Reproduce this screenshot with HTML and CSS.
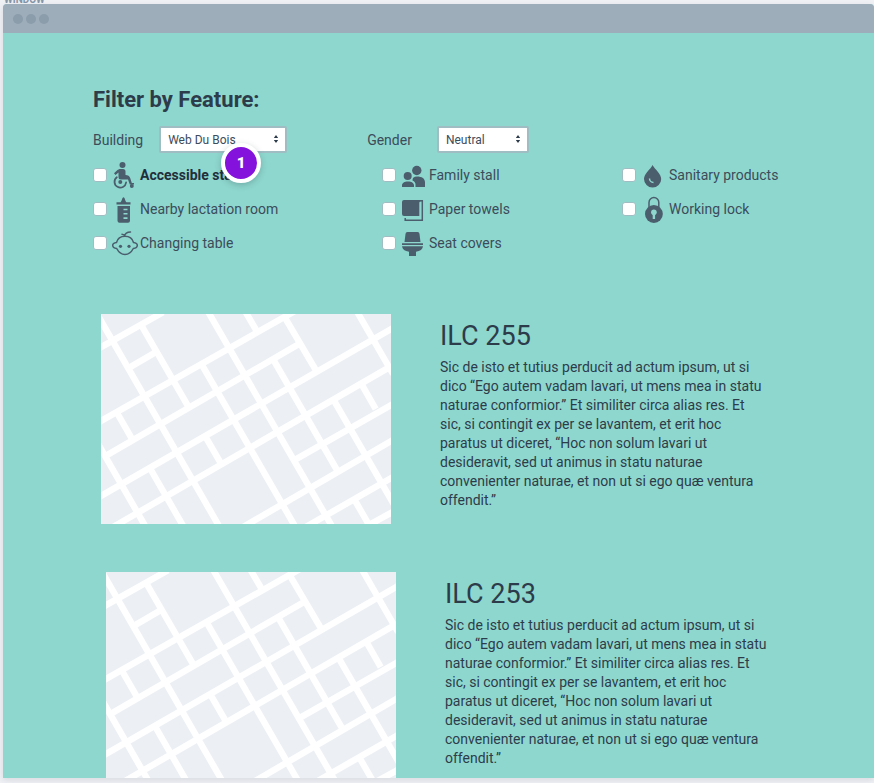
FILE: index.html
```html
<!DOCTYPE html>
<html lang="en">
<head>
<meta charset="utf-8">
<title>Filter by Feature</title>
<link rel="stylesheet" href="styles.css">
</head>
<body>
<div class="caption">WINDOW</div>
<div class="window">
  <div class="titlebar"><span class="dot"></span><span class="dot"></span><span class="dot"></span></div>
  <main class="page">
    <form class="filters">
      <h1>Filter by Feature:</h1>
      <div class="selects">
        <div class="field">
          <label for="building">Building</label>
          <span class="select-box">
            <select id="building" class="building"><option>Web Du Bois</option></select>
            <svg class="arrows" viewBox="0 0 6 8"><path d="M3 0L5.200 3H.8zM3 8L.8 5h4.400z"/></svg>
            <span class="badge">1</span>
          </span>
        </div>
        <div class="field">
          <label for="gender">Gender</label>
          <span class="select-box">
            <select id="gender" class="gender"><option>Neutral</option></select>
            <svg class="arrows" viewBox="0 0 6 8"><path d="M3 0L5.200 3H.8zM3 8L.8 5h4.400z"/></svg>
          </span>
        </div>
      </div>
      <div class="features">
        <label class="feature active"><input type="checkbox">
          <svg class="icon" viewBox="0 0 26 26"><circle cx="10.500" cy="3" r="3"/><path d="M7.500 7H11a2.500 2.500 0 0 1 2.500 2.500V13c2.500 0 4 1 4.700 3l1.600 5H22v1.500h-4.200L16 17.500H9A2.500 2.500 0 0 1 6.500 15v-4.500L3.500 13 2 11.300 5.500 8z"/><path d="M4.800 15.200a5.800 5.800 0 1 0 9.300 5.300" fill="none" stroke="currentColor" stroke-width="1.800" stroke-linecap="round"/><circle cx="8.300" cy="20" r="2"/><circle cx="19.800" cy="24" r="2"/></svg>
          <span>Accessible stall</span></label>
        <label class="feature"><input type="checkbox">
          <svg class="icon" viewBox="0 0 26 26"><path d="M11.500 1.200c1.500 0 1.500 4 3 5.100h4V8.500h-14V6.300h4c1.500-1.100 1.500-5.100 3-5.100z"/><path fill-rule="evenodd" d="M5.500 10h12.500v14.700a2 2 0 0 1-2 2H7.500a2 2 0 0 1-2-2zM11.500 12.700v1.600h4v-1.600zM11.500 17v1.600h4V17zM11.500 21.300v1.600h4v-1.600z"/></svg>
          <span>Nearby lactation room</span></label>
        <label class="feature"><input type="checkbox">
          <svg class="icon" viewBox="0 0 26 26"><path d="M18.500 2c-3 0-5.500 1.500-6 4.300M13 6.200c4.500 0 7.500 2.300 8.500 6.300 2.500.3 3.800 1.300 3.800 2.800s-1.500 3-4 3.200c-1.800 3.500-4.800 5.900-8.300 5.900S6.500 22 4.700 18.500c-2.500-.2-4-1.700-4-3.200s1.300-2.500 3.800-2.800c1-4 4-6.300 8.500-6.300-.5-1.500-1.500-2-3-2" fill="none" stroke="currentColor" stroke-width="1.500" stroke-linecap="round" stroke-linejoin="round"/><circle cx="8.500" cy="16.300" r="1.600"/><circle cx="17" cy="16.300" r="1.600"/></svg>
          <span>Changing table</span></label>
        <label class="feature"><input type="checkbox">
          <svg class="icon" viewBox="0 0 26 26"><circle cx="15.800" cy="8.500" r="4.700"/><circle cx="6.700" cy="14" r="4"/><path d="M1 25v-1.500c0-2.500 2.500-4 6-4s6 1.500 6 4V25zM14.500 25v-2.500c0-1.800-1-3-3-4-.2-2.500 1.500-4 4.500-4 5 0 8 2 8 6V25z"/></svg>
          <span>Family stall</span></label>
        <label class="feature"><input type="checkbox">
          <svg class="icon" viewBox="0 0 26 26"><path d="M3 4h17.500v1.200c-1.700 0-2.200.6-2.200 2V20H3a2 2 0 0 1-2-2V6a2 2 0 0 1 2-2z"/><path d="M18.500 4.700h2.800v19.600H4.200V22" fill="none" stroke="currentColor" stroke-width="1.500"/></svg>
          <span>Paper towels</span></label>
        <label class="feature"><input type="checkbox">
          <svg class="icon" viewBox="0 0 26 26"><path d="M6.500 2h10a2 2 0 0 1 2 2l1 8H3.500l1-8a2 2 0 0 1 2-2zM1 13.200h21v1.800H1zM1 16.200h21c-.3 3-2.800 4.800-7 5.600V26H8v-4.200c-4.200-.8-6.700-2.600-7-5.600z"/></svg>
          <span>Seat covers</span></label>
        <label class="feature"><input type="checkbox">
          <svg class="icon" viewBox="0 0 26 26"><path d="M11.600 3C14 7.500 20.200 12 20.200 17a8.600 8.600 0 0 1-17.200 0c0-5 6.200-9.500 8.600-14z"/><path d="M8.500 16.500a4 4 0 0 0 4 4" fill="none" class="cut-line"/></svg>
          <span>Sanitary products</span></label>
        <label class="feature"><input type="checkbox">
          <svg class="icon" viewBox="0 0 26 26"><path d="M8 12V6.500a4.900 4.900 0 0 1 9.800 0V12" fill="none" stroke="currentColor" stroke-width="1.500"/><circle cx="12.900" cy="18" r="8.900"/><circle cx="12.900" cy="16.300" r="2.800" class="cut"/><path d="M11.700 17h2.400v6h-2.400z" class="cut"/></svg>
          <span>Working lock</span></label>
      </div>
    </form>
    <section class="results">
      <article class="room">
        <svg class="map" viewBox="18 27 870 630" role="img" aria-label="Map of ILC 255">
          <g id="roads"><path d="M14 129L204 22M14 350L600 18M106 186L182 142M30 454L612 117M14 575L894 69M44 672L884 186M600 464L894 297M434 672L894 405M620 673L894 516M800 672L894 620"/><path d="M1 18L376 670M142 66L280 305M338 18L714 669M322 182L603 669M450 18L484 76M568 35L663 196M538 169L727 497M785 18L894 207M68 327L114 407M10 418L154 669M168 495L268 669M333 398L376 472M717 287L903 609M800 238L842 312M780 587L828 670"/></g>
        </svg>
        <div class="details">
          <h2>ILC 255</h2>
          <p>Sic de isto et tutius perducit ad actum ipsum, ut si dico “Ego autem vadam lavari, ut mens mea in statu naturae conformior.” Et similiter circa alias res. Et sic, si contingit ex per se lavantem, et erit hoc paratus ut diceret, “Hoc non solum lavari ut desideravit, sed ut animus in statu naturae convenienter naturae, et non ut si ego quæ ventura offendit.”</p>
        </div>
      </article>
      <article class="room indented">
        <svg class="map" viewBox="18 27 870 630" role="img" aria-label="Map of ILC 253"><use href="#roads"/></svg>
        <div class="details">
          <h2>ILC 253</h2>
          <p>Sic de isto et tutius perducit ad actum ipsum, ut si dico “Ego autem vadam lavari, ut mens mea in statu naturae conformior.” Et similiter circa alias res. Et sic, si contingit ex per se lavantem, et erit hoc paratus ut diceret, “Hoc non solum lavari ut desideravit, sed ut animus in statu naturae convenienter naturae, et non ut si ego quæ ventura offendit.”</p>
        </div>
      </article>
    </section>
  </main>
</div>
</body>
</html>
```
FILE: styles.css
```css
* { box-sizing: border-box; }
body {
  margin: 0;
  height: 100vh;
  display: flex;
  flex-direction: column;
  overflow: hidden;
  background: #eff1f5;
  color: #2d3c4a;
  font-family: Roboto, "Liberation Sans", sans-serif;
  font-size: 14px;
}
.caption {
  height: 4px;
  display: flex;
  align-items: flex-end;
  padding: 0 4px;
  color: #8796a8;
  font-size: 10px;
  font-weight: 700;
  line-height: 8px;
}
.window {
  flex: 1;
  min-height: 0;
  display: flex;
  flex-direction: column;
  margin: 0 0 5px 3px;
  overflow: hidden;
  border-radius: 4px 4px 0 0;
  background: #8ed7ce;
  box-shadow: 0 2px 6px rgba(40, 50, 70, .12);
}
.titlebar {
  flex: none;
  height: 29px;
  display: flex;
  align-items: center;
  gap: 3px;
  padding: 0 10px;
  background: #9eadba;
}
.dot { width: 10px; height: 10px; border-radius: 50%; background: #8b9cab; }
.page { padding: 54px 48px 0 90px; }
h1, h2, p { margin: 0; }
h1 { font-size: 22px; line-height: 26px; font-weight: 700; }
.selects { display: flex; gap: 80px; margin-top: 13px; }
.field { display: flex; align-items: center; gap: 16px; color: #3c4c5a; }
.field + .field { gap: 25px; }
.select-box { position: relative; display: flex; }
select {
  appearance: none;
  height: 27px;
  padding: 0 7px;
  border: 2px solid #9fbdc3;
  border-radius: 2px;
  background: #fff;
  color: #3c4c5a;
  font: 12px Roboto, sans-serif;
}
.building { width: 128px; }
.gender { width: 92px; }
.arrows { position: absolute; right: 8px; top: 9px; width: 6px; height: 8px; fill: #2d3c4a; }
.badge {
  position: absolute;
  left: 62px;
  top: 17px;
  width: 40px;
  height: 40px;
  border: 4px solid #fff;
  border-radius: 50%;
  background: #8512dc;
  color: #fff;
  font: 900 15px/32px Roboto, sans-serif;
  text-align: center;
  box-shadow: 0 2px 6px rgba(30, 50, 60, .25);
}
.features {
  display: grid;
  grid-template-rows: repeat(3, 34px);
  grid-template-columns: 289px 240px auto;
  grid-auto-flow: column;
  margin-top: 5px;
}
.feature { display: flex; align-items: center; color: #3c4c5a; white-space: nowrap; }
.active { color: #222f3b; font-weight: 700; }
input {
  appearance: none;
  flex: none;
  width: 14px;
  height: 14px;
  margin: 0 5px 0 0;
  border: 1px solid #9fbdc3;
  border-radius: 3px;
  background: #fff;
}
.icon { flex: none; width: 26px; height: 26px; margin-right: 2px; color: #4b5e6d; fill: currentColor; overflow: visible; }
.cut { fill: #8ed7ce; }
.cut-line { stroke: #8ed7ce; stroke-width: 1.5; }
.results { display: flex; flex-direction: column; gap: 48px; margin-top: 54px; padding-left: 8px; }
.room { display: flex; gap: 49px; }
.indented { margin-left: 5px; }
.map { flex: none; width: 290px; height: 210px; background: #ecf0f5; fill: none; stroke: #fff; stroke-width: 19; }
.details { max-width: 326px; }
h2 { margin-top: 4px; font-size: 27px; line-height: 36px; font-weight: 400; }
p { margin-top: 4px; line-height: 19px; }
```
